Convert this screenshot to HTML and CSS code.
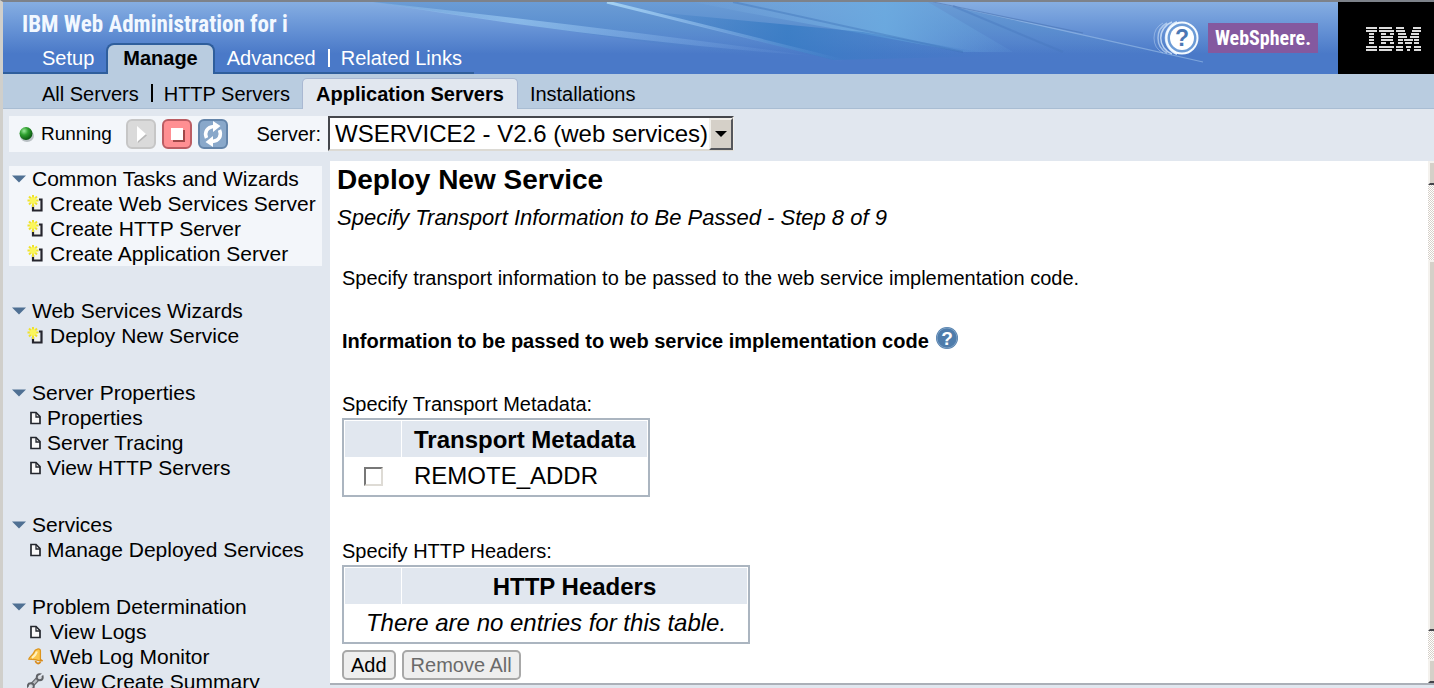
FILE: index.html
```
<!DOCTYPE html>
<html lang="en">
<head>
<meta charset="utf-8">
<title>IBM Web Administration for i</title>
<link rel="stylesheet" href="styles.css">
</head>
<body>
<svg width="0" height="0" class="defs" aria-hidden="true">
  <symbol id="i-caret" viewBox="0 0 14 8"><path d="M0 0.5h14L7 7.500z" fill="#4f7093"/></symbol>
  <symbol id="i-new" viewBox="0 0 16 17">
    <path d="M6 6h6v9H6z" fill="#f4f4ee"/>
    <path d="M11.500 4.500h2.500V15.500H5.500V10" fill="none" stroke="#25252d" stroke-width="2.200"/>
    <path d="M5.500 0v12M0 5.500h11M1.500 1.500l8 8M9.500 1.500l-8 8" stroke="#efe22c" stroke-width="2"/>
    <circle cx="5.500" cy="5.500" r="3.200" fill="#fbf65c"/>
  </symbol>
  <symbol id="i-page" viewBox="0 0 12 14"><path d="M1.500 1.500h5L10.500 5.500v7h-9z" fill="#fafafa" stroke="#24272e" stroke-width="1.700"/><path d="M6.500 1.500v4.500h4" fill="none" stroke="#24272e" stroke-width="1.300"/></symbol>
  <symbol id="i-bell" viewBox="0 0 17 19">
    <path d="M10 1.500c2-1 4 0 4 1.500L14 14.500c-4-1.500-8-2-13-2C1.500 9.500 5.500 8.500 7 4.500 7.800 2.500 8.500 2 10 1.500z" fill="#fbc64c" stroke="#dc951f" stroke-width="1.400"/>
    <path d="M10 4C9 7.500 7 9.500 4.500 11" stroke="#fff1bd" stroke-width="2.200" fill="none"/>
    <path d="M8.500 14.500c.5 3 4 4 5.500 1M13.500 13l3 1.500" stroke="#d98b1c" stroke-width="2" fill="none"/>
  </symbol>
  <symbol id="i-wrench" viewBox="0 0 18 18">
    <path d="M4.500 13.500l8.500-9" stroke="#63666b" stroke-width="5"/>
    <path d="M4.500 13.500l8.500-9" stroke="#b9bcc0" stroke-width="2.400"/>
    <circle cx="13.500" cy="4.500" r="3.200" fill="#d5d8dc" stroke="#5e6166" stroke-width="2"/><path d="M13 4l4.500-3.500" stroke="#e1e7ef" stroke-width="2"/>
    <circle cx="4" cy="14" r="3.200" fill="#d5d8dc" stroke="#5e6166" stroke-width="2"/><path d="M4 14l-3.500 3" stroke="#e1e7ef" stroke-width="2"/>
  </symbol>
</svg>

<div class="page">
  <header class="banner">
    <svg class="waves" viewBox="0 0 1431 72" preserveAspectRatio="none" aria-hidden="true">
      <defs>
        <linearGradient id="g1" x1="0" y1="0" x2="1" y2="0"><stop offset="0" stop-color="#7cacdf" stop-opacity="0.100"/><stop offset="0.600" stop-color="#6cabe0" stop-opacity="0.900"/><stop offset="1" stop-color="#6aa5de" stop-opacity="0.100"/></linearGradient>
        <linearGradient id="g2" x1="0" y1="0" x2="1" y2="0"><stop offset="0" stop-color="#3c7bc2" stop-opacity="0.100"/><stop offset="0.400" stop-color="#387cc4" stop-opacity="0.850"/><stop offset="1" stop-color="#4279c8" stop-opacity="0"/></linearGradient>
        <linearGradient id="g3" gradientUnits="userSpaceOnUse" x1="380" y1="0" x2="830" y2="0"><stop offset="0" stop-color="#9fcdf4" stop-opacity="0.300"/><stop offset="0.300" stop-color="#9fcdf4" stop-opacity="0.650"/><stop offset="1" stop-color="#7ba6e4" stop-opacity="0"/></linearGradient>
        <linearGradient id="g5" gradientUnits="userSpaceOnUse" x1="604" y1="0" x2="842" y2="0"><stop offset="0" stop-color="#a4d2f4"/><stop offset="1" stop-color="#7ba6e4" stop-opacity="0"/></linearGradient>
        <linearGradient id="g6" x1="0" y1="0" x2="0" y2="1"><stop offset="0.400" stop-color="#4f8ac8" stop-opacity="0.500"/><stop offset="1" stop-color="#4a79c8" stop-opacity="0"/></linearGradient>
      </defs>
      <path d="M370 0H930Q1060 28 1200 62H800Q600 35 370 0z" fill="url(#g6)"/>
      <path d="M690 0H925L1010 50 960 50 740 10z" fill="url(#g1)"/>
      <path d="M640 9L860 30 1000 54 830 58z" fill="url(#g2)"/>
      <path d="M730 0L960 50" stroke="#3b70b7" stroke-opacity="0.400" stroke-width="2"/>
      <path d="M370 0Q600 25 810 54Q600 38 370 0z" fill="url(#g3)"/>
      <path d="M604 0L842 59" stroke="url(#g5)" stroke-width="3"/>
      <path d="M930 0Q1060 28 1200 60" stroke="#91b6e4" stroke-width="1.200" fill="none" opacity="0.700"/>
      <path d="M930 0L1080 31" stroke="#4b75b5" stroke-width="1.200" opacity="0.600"/>
      <path d="M950 4L1060 50" stroke="#4777be" stroke-width="2" opacity="0.400"/>
    </svg>
    <div class="banner-left">
      <div class="product">IBM Web Administration for i</div>
      <nav class="tabs" aria-label="Main">
        <a href="#">Setup</a>
        <a href="#" class="current">Manage</a>
        <a href="#">Advanced</a>
        <a href="#" class="after-bar">Related Links</a>
      </nav>
    </div>
    <div class="brands">
      <svg class="rings" viewBox="0 0 50 36" role="img" aria-label="Help">
        <g fill="none" stroke="#d4e6fa"><path d="M14 3a17 17 0 0 0 0 30" opacity="0.400"/><path d="M18 3a17 17 0 0 0 0 30" opacity="0.600" stroke-width="1.500"/><path d="M23 2a17 17 0 0 0 0 32" opacity="0.800" stroke-width="1.500"/><path d="M28 2a17 17 0 0 0 0 32" stroke-width="2"/></g>
        <circle cx="33" cy="18" r="15.500" fill="#6c9bd6" stroke="#f4faff" stroke-width="2"/>
        <circle cx="33" cy="18" r="12" fill="#fff"/>
        <text x="33" y="26" text-anchor="middle" class="ring-q">?</text>
      </svg>
      <span class="websphere">WebSphere.</span>
    </div>
    <div class="ibm">
      <svg viewBox="0 0 55 24" role="img" aria-label="IBM" fill="#dcdcdc">
        <path d="M0 0h11v2H0zM0 3h11v2H0zM3 6h5v2H3zM3 9h5v2H3zM3 12h5v2H3zM3 15h5v2H3zM0 19h11v2H0zM0 22h11v2H0z"/>
        <path d="M13 0h13v2H13zM13 3h15v2H13zM15 6h5v2h-5zM24 6h4v2h-4zM15 9h12v2H15zM15 12h12v2H15zM15 15h5v2h-5zM24 15h4v2h-4zM13 19h15v2H13zM13 22h13v2H13z"/>
        <path d="M30 0h8v2h-8zM47 0h8v2h-8zM30 3h9v2h-9zM46 3h9v2h-9zM32 6h8v2h-8zM45 6h8v2h-8zM32 9h9v2h-9zM44 9h9v2h-9zM32 12h5v2h-5zM38 12h9v2h-9zM48 12h5v2h-5zM32 15h5v2h-5zM39 15h7v2h-7zM48 15h5v2h-5zM30 19h7v2h-7zM40 19h5v2h-5zM48 19h7v2h-7zM30 22h7v2h-7zM41 22h3v2h-3zM48 22h7v2h-7z"/>
      </svg>
    </div>
  </header>

  <nav class="subtabs" aria-label="Manage">
    <a href="#">All Servers</a>
    <a href="#" class="after-bar">HTTP Servers</a>
    <a href="#" class="current">Application Servers</a>
    <a href="#">Installations</a>
  </nav>

  <div class="toolbar">
    <div class="status">
      <svg class="led" viewBox="0 0 16 16" aria-hidden="true"><defs><radialGradient id="led" cx="0.350" cy="0.300" r="0.700"><stop offset="0" stop-color="#9be79a"/><stop offset="0.450" stop-color="#2fa02f"/><stop offset="1" stop-color="#0d5a12"/></radialGradient></defs><ellipse cx="9" cy="10" rx="7" ry="6" fill="#b9c0c4"/><circle cx="8" cy="7.500" r="6.500" fill="url(#led)"/></svg>
      <span class="state">Running</span>
      <button class="tool start" type="button" disabled aria-label="Start"><svg viewBox="0 0 26 26"><path d="M10 7v15l9-7.500z" fill="#b8b8b8"/><path d="M9 5v16l9-8z" fill="#fff"/></svg></button>
      <button class="tool stop" type="button" aria-label="Stop"><svg viewBox="0 0 26 26"><path d="M9 9h12v12H9z" fill="#a04848"/><path d="M7 7h12v12H7z" fill="#fff"/></svg></button>
      <button class="tool restart" type="button" aria-label="Restart"><svg viewBox="0 0 26 26"><g fill="none" stroke="#fff" stroke-width="3.500"><path d="M6.500 17C4 11 7 6 14 5.500"/><path d="M19.500 9C22 15 19 20 12 20.500"/></g><path d="M13 0l7.500 5-7.500 6zM13 26l-7.500-5 7.500-6z" fill="#fff"/></svg></button>
      <label for="server">Server:</label>
    </div>
    <div class="picker">
      <select id="server"><option>WSERVICE2 - V2.6 (web services)</option></select>
      <span class="picker-arrow" aria-hidden="true"></span>
    </div>
  </div>

  <div class="body">
    <nav class="side" aria-label="Tasks">
      <section class="group lit">
        <h2><svg class="caret"><use href="#i-caret"/></svg>Common Tasks and Wizards</h2>
        <a href="#"><svg class="ico"><use href="#i-new"/></svg>Create Web Services Server</a>
        <a href="#"><svg class="ico"><use href="#i-new"/></svg>Create HTTP Server</a>
        <a href="#"><svg class="ico"><use href="#i-new"/></svg>Create Application Server</a>
      </section>
      <section class="group">
        <h2><svg class="caret"><use href="#i-caret"/></svg>Web Services Wizards</h2>
        <a href="#"><svg class="ico"><use href="#i-new"/></svg>Deploy New Service</a>
      </section>
      <section class="group">
        <h2><svg class="caret"><use href="#i-caret"/></svg>Server Properties</h2>
        <a href="#" class="tight"><svg class="ico doc"><use href="#i-page"/></svg>Properties</a>
        <a href="#" class="tight"><svg class="ico doc"><use href="#i-page"/></svg>Server Tracing</a>
        <a href="#" class="tight"><svg class="ico doc"><use href="#i-page"/></svg>View HTTP Servers</a>
      </section>
      <section class="group">
        <h2><svg class="caret"><use href="#i-caret"/></svg>Services</h2>
        <a href="#" class="tight"><svg class="ico doc"><use href="#i-page"/></svg>Manage Deployed Services</a>
      </section>
      <section class="group">
        <h2><svg class="caret"><use href="#i-caret"/></svg>Problem Determination</h2>
        <a href="#"><svg class="ico doc"><use href="#i-page"/></svg>View Logs</a>
        <a href="#"><svg class="ico"><use href="#i-bell"/></svg>Web Log Monitor</a>
        <a href="#"><svg class="ico"><use href="#i-wrench"/></svg>View Create Summary</a>
      </section>
    </nav>

    <main class="content">
      <div class="form">
        <h1>Deploy New Service</h1>
        <p class="step">Specify Transport Information to Be Passed - Step 8 of 9</p>
        <p class="intro">Specify transport information to be passed to the web service implementation code.</p>
        <h2 class="heading">Information to be passed to web service implementation code
          <svg class="help" viewBox="0 0 24 24" role="img" aria-label="Help"><circle cx="12" cy="12" r="11" fill="#4e7cab"/><circle cx="12" cy="12" r="10" fill="none" stroke="#7da0c4" stroke-width="1"/><text x="12" y="19" text-anchor="middle" class="help-q">?</text></svg>
        </h2>
        <p class="caption" id="c1">Specify Transport Metadata:</p>
        <table class="grid meta" aria-labelledby="c1">
          <thead><tr><th class="pick"></th><th>Transport Metadata</th></tr></thead>
          <tbody><tr><td class="pick"><input type="checkbox" id="addr"></td><td><label for="addr">REMOTE_ADDR</label></td></tr></tbody>
        </table>
        <p class="caption" id="c2">Specify HTTP Headers:</p>
        <table class="grid headers" aria-labelledby="c2">
          <thead><tr><th class="pick"></th><th>HTTP Headers</th></tr></thead>
          <tbody><tr><td colspan="2" class="empty">There are no entries for this table.</td></tr></tbody>
        </table>
        <div class="actions">
          <button type="button">Add</button>
          <button type="button" disabled>Remove All</button>
        </div>
      </div>
      <div class="scrollbar" aria-hidden="true"><i class="end"></i><i class="thumb"></i><i class="end"></i></div>
    </main>
  </div>
</div>
</body>
</html>
```
FILE: styles.css
```
* { box-sizing: border-box; }
body {
  margin: 0;
  background: #e1e7ef;
  color: #000;
  font-family: "Liberation Sans", Arial, sans-serif;
  font-size: 20px;
}
a { color: inherit; text-decoration: none; }
h1, h2, p { margin: 0; }
.defs { position: absolute; }
.page {
  display: flex;
  flex-direction: column;
  height: 100vh;
  overflow: hidden;
  border-top: 2px solid #7d828a;
  border-left: 3px solid #d0cfcb;
}

/* banner */
.banner {
  position: relative;
  display: flex;
  flex: none;
  height: 72px;
  background: linear-gradient(#86aee2, #6c98d8 30%, #4a79c8 72%, #4a79c8);
}
.waves { position: absolute; inset: 0; width: 100%; height: 100%; }
.banner-left {
  position: relative;
  flex: 1;
  display: flex;
  flex-direction: column;
  justify-content: space-between;
  align-items: flex-start;
}
.product {
  padding: 8px 0 0 19px;
  color: #f2f8ff;
  font-family: "Roboto Condensed", Roboto, "Liberation Sans", sans-serif;
  font-size: 23px;
  font-weight: bold;
  line-height: 30px;
  white-space: nowrap;
}
.tabs {
  display: flex;
  color: #fff;
  line-height: 26px;
  border-bottom: 2px solid #2f5e9c;
  padding: 0 0 0 27px;
}
.tabs a { padding: 2px 12px 0; }
.tabs .current {
  margin-bottom: -2px;
  padding: 0 15px 3px;
  border: 2px solid #2f5e9c;
  border-bottom: 0;
  border-radius: 8px 8px 0 0;
  background: #b9cce0;
  color: #000;
  font-weight: bold;
}
.tabs .after-bar, .subtabs .after-bar { display: flex; align-items: flex-start; padding-left: 0; }
.after-bar::before { content: ""; width: 2px; height: 18px; margin: 4px 11px 0 0; background: currentColor; }
.brands { position: relative; display: flex; align-items: center; gap: 9px; padding-right: 20px; }
.rings { width: 50px; height: 36px; }
.ring-q { font-size: 23px; font-weight: bold; fill: #4c78b4; }
.websphere {
  padding: 0 7px;
  background: #84599f;
  color: #fff;
  font-family: "Roboto Condensed", Roboto, "Liberation Sans", sans-serif;
  font-size: 20px;
  font-weight: bold;
  line-height: 30px;
}
.ibm {
  position: relative;
  display: flex;
  align-items: center;
  padding: 2px 13px 0 28px;
  background: #000;
}
.ibm svg { width: 55px; height: 24px; }

/* second row of tabs */
.subtabs {
  display: flex;
  flex: none;
  height: 35px;
  padding: 4px 0 0 27px;
  border-bottom: 1px solid #a9bdd3;
  background: #b9cce0;
  line-height: 32px;
}
.subtabs a { height: 32px; padding: 0 12px; }
.subtabs .after-bar::before { margin-top: 6px; }
.subtabs .current {
  height: 31px;
  padding: 0 13px;
  border: 1px solid #a9b8d2;
  border-bottom: 0;
  border-radius: 5px 5px 0 0;
  background: #e1e7ef;
  font-weight: bold;
  line-height: 30px;
}

/* server status */
.toolbar { display: flex; flex: none; padding: 7px 0 9px 6px; }
.status {
  display: flex;
  align-items: center;
  width: 319px;
  height: 36px;
  padding-left: 9px;
  background: #f3f6fa;
}
.led { width: 16px; height: 16px; }
.state { width: 85px; margin-left: 7px; font-size: 19px; }
.status label { margin-left: auto; margin-right: 7px; }
.tool {
  width: 30px;
  height: 30px;
  margin-right: 6px;
  padding: 0;
  border: 2px solid;
  border-radius: 6px;
}
.tool svg { display: block; width: 26px; height: 26px; }
.start { border-color: #c6c6c6; background: #dadada; }
.stop { border-color: #bb5d63; background: #ff8f92; }
.restart { border-color: #6485aa; background: #89a8ca; }
.picker { position: relative; }
.picker select {
  appearance: none;
  display: block;
  height: 35px;
  padding: 0 24px 0 5px;
  border: 2px solid;
  border-color: #45474c #f1efea #dcdad4 #45474c;
  border-radius: 0;
  background: #fff;
  color: #000;
  font: 24px "Liberation Sans", Arial, sans-serif;
}
.picker-arrow {
  position: absolute;
  top: 2px;
  right: 1px;
  bottom: 2px;
  display: grid;
  place-items: center;
  width: 24px;
  border: 2px solid;
  border-color: #f1efea #55575c #55575c #f1efea;
  background: #d5d0c8;
  pointer-events: none;
}
.picker-arrow::before { content: ""; border: 6px solid transparent; border-top-color: #000; border-bottom: 0; }

.body { display: flex; flex: 1; min-height: 0; padding-bottom: 3px; }

/* task list */
.side { flex: none; width: 327px; height: calc(100% + 3px); padding: 5px 8px 0 6px; overflow: hidden; font-size: 21px; line-height: 25px; white-space: nowrap; }
.group { margin-bottom: 32px; }
.lit { background: #f3f6fa; }
.group h2 { display: flex; align-items: center; gap: 6px; padding-left: 3px; font-size: inherit; font-weight: normal; }
.group a { display: flex; align-items: center; gap: 6px; padding-left: 18px; }
.group .tight { gap: 3px; }
.caret { width: 14px; height: 8px; }
.ico { flex: none; width: 17px; height: 17px; }
.doc { height: 14px; }

/* wizard */
.content { display: flex; flex: 1; min-width: 0; border-bottom: 2px solid #abb0b8; background: #fff; }
.form { flex: 1; padding: 2px 12px 0; overflow: hidden; }
.form h1 { margin-left: -5px; font-size: 28px; line-height: 34px; }
.step { margin-left: -5px; padding-top: 8px; font-size: 22px; font-style: italic; line-height: 26px; }
.intro { padding-top: 34px; line-height: 26px; }
.heading { display: flex; align-items: center; gap: 6px; padding-top: 37px; font-size: 20px; line-height: 26px; }
.help { width: 24px; height: 24px; margin-top: -6px; }
.help-q { fill: #fff; font-size: 19px; font-weight: bold; }
.caption { padding-top: 37px; line-height: 27px; }
.grid + .caption { padding-top: 41px; }
.grid {
  border: 2px solid #abb5c0;
  border-spacing: 1px;
  font-size: 24px;
  line-height: 28px;
}
.grid th, .grid td { height: 36px; padding: 0 12px; text-align: left; }
.grid th { padding-top: 2px; background: #e1e7ef; }
.grid .pick { width: 56px; padding: 0; text-align: center; }
.headers { width: 408px; }
.headers th, .grid .empty { text-align: center; }
.grid .empty { font-style: italic; }
.grid input {
  appearance: none;
  display: block;
  width: 19px;
  height: 19px;
  margin: 0 auto;
  border: 2px solid;
  border-color: #777 #dedbd5 #dedbd5 #777;
  background: #fff;
}
.actions { display: flex; gap: 6px; padding-top: 6px; }
.actions button {
  height: 30px;
  padding: 0 7px;
  border: 2px solid #a8a8a8;
  border-radius: 5px;
  background: #eee;
  color: #000;
  font: 20px "Liberation Sans", Arial, sans-serif;
}
.actions button:disabled { color: #6a6a6a; }

.scrollbar {
  display: flex;
  flex-direction: column;
  width: 6px;
  background: repeating-conic-gradient(#d5d0c8 0 25%, #fff 0 50%) 0 0 / 2px 2px;
}
.scrollbar i { border: 2px solid #f4f2ee; border-right: 0; border-bottom-color: #44444a; background: #d5d0c8; }
.end { height: 24px; }
.thumb { flex: 1; margin: 75px 0 28px; }
```
